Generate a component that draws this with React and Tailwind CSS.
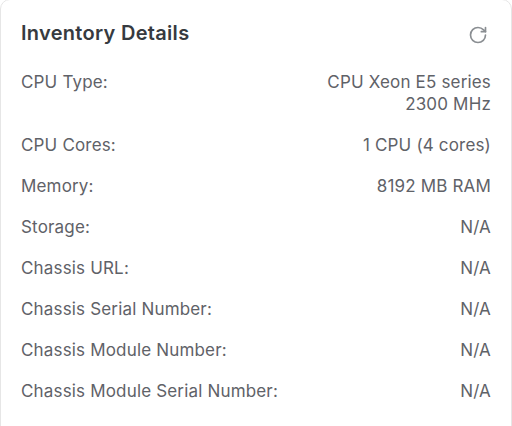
import React from "react";
import { RotateCw } from "lucide-react";

const rows = [
  ["CPU Type:", ["CPU Xeon E5 series", "2300 MHz"]],
  ["CPU Cores:", ["1 CPU (4 cores)"]],
  ["Memory:", ["8192 MB RAM"]],
  ["Storage:", ["N/A"]],
  ["Chassis URL:", ["N/A"]],
  ["Chassis Serial Number:", ["N/A"]],
  ["Chassis Module Number:", ["N/A"]],
  ["Chassis Module Serial Number:", ["N/A"]],
];

export default function App() {
  return (
    <div className="w-[512px] h-[426px] overflow-hidden bg-white font-['Inter',sans-serif]">
      <div className="h-[440px] -mt-px border border-[#e6e6e6] rounded-[10px] pl-5 pr-5 pt-[20px]">
        <div className="flex items-start justify-between h-[51px]">
          <h2 className="text-[20px] leading-[26px] font-semibold tracking-[0.3px] text-[#363a40]">Inventory Details</h2>
          <RotateCw className="w-[20px] h-[20px] text-[#8a8e92] mt-[5px] mr-[3px]" strokeWidth={2} />
        </div>
        <div className="flex flex-col gap-[19px] text-[17px] leading-[22px] tracking-[0.17px] text-[#5f6268]">
          {rows.map(([k, v]) => (
            <div key={k} className="flex justify-between">
              <div>{k}</div>
              <div className="text-right">
                {v.map((l) => (
                  <div key={l}>{l}</div>
                ))}
              </div>
            </div>
          ))}
        </div>
      </div>
    </div>
  );
}
